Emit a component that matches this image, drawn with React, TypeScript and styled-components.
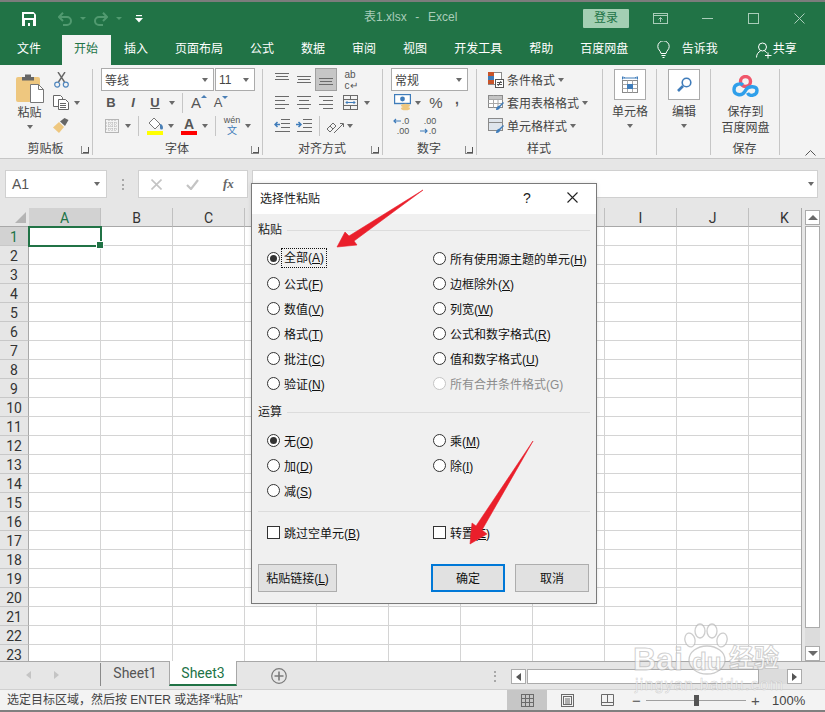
import * as React from 'react';
import styled, { createGlobalStyle } from 'styled-components';

const GlobalStyle = createGlobalStyle`
    html, body { margin: 0; padding: 0; background: #e6e6e6; }
    body {
        font-family: "Liberation Sans", "Noto Sans CJK SC", sans-serif;
        font-size: 12px;
        color: #444;
        overflow: hidden;
    }
    * { box-sizing: border-box; }
    svg { display: block; }
`;

const green = '#217346';

const Window = styled.div`
    position: relative;
    width: 825px;
    height: 712px;
    border-top: 2px solid #7c7c7c;
    display: flex;
    flex-direction: column;
    overflow: hidden;
`;

/* ---------- title bar ---------- */
const TitleBar = styled.div`
    height: 33px;
    background: ${green};
    display: flex;
    align-items: center;
    position: relative;
`;
const Qat = styled.div<{ $w: number }>`
    width: ${p => p.$w}px;
    display: flex;
    justify-content: center;
    flex: none;
`;
const TitleText = styled.div`
    position: absolute;
    left: 364px;
    top: 7px;
    line-height: 17px;
    color: #a9cdb9;
    white-space: pre;
    word-spacing: 1px;
`;
const Login = styled.div`
    width: 46px;
    height: 19px;
    margin-left: 435px;
    background: #a3cfb3;
    border-radius: 1px;
    color: ${green};
    text-align: center;
    line-height: 18px;
`;
const WinBtn = styled.div<{ $w: number }>`
    width: ${p => p.$w}px;
    display: flex;
    justify-content: center;
    flex: none;
`;

/* ---------- tabs ---------- */
const TabBar = styled.div`
    height: 30px;
    background: ${green};
    display: flex;
    align-items: stretch;
    padding-left: 3.5px;
    color: #fff;
`;
const Tab = styled.div<{ $active?: boolean }>`
    padding: 0 13.5px;
    line-height: 28px;
    flex: none;
    ${p => p.$active && `
        background: #f3f3f3;
        color: ${green};
        padding: 0 12.5px;
        margin: 0 0 0 7px;
    `}
`;
const TabIcon = styled.div<{ $ml: number }>`
    margin-left: ${p => p.$ml}px;
    display: flex;
    align-items: center;
    flex: none;
`;
const TabLabel = styled.div<{ $ml: number }>`
    margin-left: ${p => p.$ml}px;
    line-height: 28px;
    flex: none;
`;

/* ---------- ribbon ---------- */
const Ribbon = styled.div`
    height: 94px;
    background: #f3f3f3;
    border-bottom: 1px solid #c6c6c6;
    display: flex;
    position: relative;
    padding-top: 3px;
`;
const Group = styled.section<{ $w: number }>`
    width: ${p => p.$w}px;
    height: 87px;
    flex: none;
    display: flex;
    flex-direction: column;
    position: relative;
    &::after {
        content: "";
        position: absolute;
        right: 0;
        top: 1px;
        bottom: 0;
        width: 1px;
        background: #c6c6c6;
    }
`;
const GroupBody = styled.div`
    height: 72px;
    flex: none;
`;
const GroupBodyRow = styled(GroupBody)`
    display: flex;
`;
const GroupLabel = styled.div`
    height: 15px;
    line-height: 19px;
    text-align: center;
    position: relative;
    padding-right: 2px;
`;
const Launcher = styled.span`
    position: absolute;
    right: 4px;
    top: 6px;
    width: 8px;
    height: 8px;
    border-left: 1px solid #8a8a8a;
    border-bottom: 1px solid #8a8a8a;
    &::after {
        content: "";
        position: absolute;
        right: 0;
        bottom: 0;
        width: 5px;
        height: 5px;
        border-right: 1px solid #555;
        border-bottom: 1px solid #555;
    }
`;
const ToolRow = styled.div<{ $pad?: number }>`
    display: flex;
    height: 23px;
    align-items: center;
    padding-left: ${p => p.$pad ?? 0}px;
`;
const Tool = styled.div<{ $w: number; $selected?: boolean }>`
    width: ${p => p.$w}px;
    height: 23px;
    flex: none;
    display: flex;
    align-items: center;
    justify-content: center;
    ${p => p.$selected && `
        background: #c6c6c6;
        border: 1px solid #a0a0a0;
    `}
`;
const Caret = styled.span`
    display: inline-block;
    width: 0;
    height: 0;
    border-left: 3.5px solid transparent;
    border-right: 3.5px solid transparent;
    border-top: 4px solid #6a6a6a;
`;
const RowSep = styled.span<{ $m: number }>`
    width: 1px;
    height: 20px;
    flex: none;
    background: #c6c6c6;
    margin: 0 ${p => p.$m}px;
`;
const Combo = styled.div<{ $w: number; $ml?: number }>`
    width: ${p => p.$w}px;
    height: 23px;
    margin-left: ${p => p.$ml ?? 0}px;
    flex: none;
    background: #fff;
    border: 1px solid #ababab;
    display: flex;
    align-items: center;
    justify-content: space-between;
    padding: 0 5px 0 3px;
    color: #444;
`;
const FontGlyph = styled.span<{ $size: number; $bold?: boolean; $italic?: boolean; $under?: boolean; $raise?: number }>`
    font-size: ${p => p.$size}px;
    font-weight: ${p => (p.$bold ? 700 : 400)};
    font-style: ${p => (p.$italic ? 'italic' : 'normal')};
    text-decoration: ${p => (p.$under ? 'underline' : 'none')};
    font-family: "Liberation Sans", sans-serif;
    color: #555;
    line-height: 1;
    margin-bottom: ${p => p.$raise ?? 0}px;
`;
const GrowA = styled.span`
    position: relative;
    display: inline-block;
    padding-right: 4px;
`;
const GrowMark = styled.i<{ $down?: boolean }>`
    position: absolute;
    right: -2px;
    top: 0;
    width: 0;
    height: 0;
    border-left: 3px solid transparent;
    border-right: 3px solid transparent;
    ${p => (p.$down ? 'border-top: 3px solid #4a7fb5;' : 'border-bottom: 3px solid #4a7fb5;')}
`;
const ColorA = styled.span`
    display: flex;
    flex-direction: column;
    align-items: center;
    width: 16px;
    line-height: 14px;
    font-weight: 700;
    font-size: 14px;
    color: #555;
    font-family: "Liberation Sans", sans-serif;
    margin-top: 1px;
`;
const ColorBar = styled.i`
    display: block;
    width: 16px;
    height: 4px;
    background: #f00;
`;
const Phonetic = styled.span`
    display: flex;
    flex-direction: column;
    align-items: center;
    line-height: 10px;
    font-size: 9px;
    color: #555;
`;
const PhoneticZi = styled.span`
    color: #3f7cba;
    font-size: 10px;
    line-height: 11px;
`;
const WrapText = styled.span`
    font-size: 10px;
    line-height: 11px;
    color: #555;
    display: flex;
    flex-direction: column;
    font-family: "Liberation Sans", sans-serif;
`;
const DecimalStack = styled.span`
    font-size: 9px;
    line-height: 10px;
    color: #555;
    display: flex;
    flex-direction: column;
    align-items: flex-end;
    font-family: "Liberation Sans", sans-serif;
`;
const DecRow = styled.span`
    display: flex;
    align-items: center;
    gap: 1px;
`;
const ClipCol = styled.div`
    width: 47px;
    margin-left: 6px;
    flex: none;
    display: flex;
    flex-direction: column;
    align-items: center;
    padding-top: 5px;
    color: #333;
`;
const SmallCol = styled.div`
    width: 30px;
    flex: none;
`;
const BigText = styled.div`
    line-height: 16px;
    text-align: center;
    color: #444;
    white-space: nowrap;
`;
const PasteLabel = styled(BigText)`
    margin-top: 2px;
`;
const CaretLine = styled.div`
    height: 12px;
    display: flex;
    align-items: center;
    justify-content: center;
`;
const StyleRow = styled.div`
    display: flex;
    height: 23px;
    align-items: center;
    padding-left: 11px;
    gap: 3px;
    color: #444;
`;
const StyleIcon = styled.span`
    width: 16px;
    flex: none;
`;
const BigBox = styled.div`
    width: 32px;
    height: 31px;
    margin: 1px auto 4px;
    background: #fff;
    border: 1px solid #ababab;
    display: flex;
    align-items: center;
    justify-content: center;
`;
const SaveLogo = styled.div`
    height: 36px;
    padding: 7px 0 0;
    display: flex;
    justify-content: center;
`;
const Collapse = styled.div`
    position: absolute;
    right: 9px;
    bottom: 2px;
`;

/* ---------- formula bar ---------- */
const FormulaBar = styled.div`
    height: 49px;
    background: #e6e6e6;
    display: flex;
    padding: 11px 7px 0 5px;
    align-items: flex-start;
`;
const NameBox = styled.div`
    width: 102px;
    height: 28px;
    background: #fff;
    border: 1px solid #d0d0d0;
    display: flex;
    align-items: center;
    justify-content: space-between;
    padding: 0 6px;
    font-size: 14px;
    color: #555;
`;
const Dots = styled.div`
    width: 2px;
    height: 11px;
    background: repeating-linear-gradient(to bottom, #a8a8a8 0 2px, transparent 2px 4.5px);
`;
const DotsSlot = styled.div<{ $w: number }>`
    width: ${p => p.$w}px;
    height: 28px;
    flex: none;
    display: flex;
    align-items: center;
    justify-content: center;
`;
const FormulaBtns = styled.div`
    width: 110px;
    height: 28px;
    background: #fff;
    border: 1px solid #d0d0d0;
    display: flex;
    align-items: center;
    padding-left: 12px;
    gap: 24px;
    flex: none;
`;
const Fx = styled.span`
    font-family: "Liberation Serif", serif;
    font-style: italic;
    font-weight: 700;
    font-size: 13px;
    color: #666;
`;
const FormulaInput = styled.div`
    flex: 1;
    height: 28px;
    margin-left: 4px;
    background: #fff;
    border: 1px solid #d0d0d0;
    display: flex;
    align-items: center;
    justify-content: flex-end;
    padding-right: 3px;
`;

/* ---------- sheet ---------- */
const SheetArea = styled.div`
    height: 453px;
    display: flex;
    background: #e6e6e6;
`;
const Sheet = styled.div`
    width: 802px;
    flex: none;
    overflow: hidden;
    border-right: 1px solid #a8a8a8;
`;
const SheetGrid = styled.div`
    display: grid;
    grid-template-columns: 29px repeat(11, 72px);
    grid-auto-rows: 19px;
    width: 821px;
`;
const Corner = styled.div`
    height: 19px;
    background: #e6e6e6;
    border-bottom: 1px solid #a8a8a8;
    position: relative;
    &::after {
        content: "";
        position: absolute;
        right: 3px;
        bottom: 3px;
        border-left: 11px solid transparent;
        border-bottom: 11px solid #b4b4b4;
    }
`;
const ColHead = styled.div<{ $on?: boolean }>`
    background: ${p => (p.$on ? '#d2d2d2' : '#e6e6e6')};
    color: ${p => (p.$on ? green : '#333')};
    border-bottom: 1px solid #a8a8a8;
    border-right: 1px solid #c0c0c0;
    text-align: center;
    font-family: Roboto, sans-serif;
    font-size: 14px;
    line-height: 20px;
`;
const RowHead = styled.div<{ $on?: boolean }>`
    background: ${p => (p.$on ? '#d2d2d2' : '#e6e6e6')};
    color: ${p => (p.$on ? green : '#333')};
    border-bottom: 1px solid #c8c8c8;
    border-right: 1px solid #a8a8a8;
    text-align: center;
    font-family: Roboto, sans-serif;
    font-size: 14px;
    line-height: 20px;
`;
const Cell = styled.div<{ $on?: boolean }>`
    background: #fff;
    border-right: 1px solid #d4d4d4;
    border-bottom: 1px solid #d4d4d4;
    position: relative;
    ${p => p.$on && `
        border: 2px solid ${green};
        margin: -1px 0 -1px -1px;
        width: 74px;
        z-index: 2;
        &::after {
            content: "";
            position: absolute;
            right: -4px;
            bottom: -4px;
            width: 6px;
            height: 6px;
            background: ${green};
            border: 1px solid #fff;
        }
    `}
`;
const VScroll = styled.div`
    flex: 1;
    display: flex;
    flex-direction: column;
    padding: 2px 5px 0 3px;
`;
const ScrollBtn = styled.div`
    background: #fff;
    border: 1px solid #ababab;
    display: flex;
    align-items: center;
    justify-content: center;
    flex: none;
`;
const VBtn = styled(ScrollBtn)`
    height: 15px;
    width: 100%;
`;
const VThumb = styled.div`
    height: 402px;
    margin: 1px 0 0;
    background: #fff;
    border: 1px solid #ababab;
    flex: none;
`;
const VTrack = styled.div`
    flex: 1;
    background: #dcdcdc;
`;
const UpArrow = styled.i<{ $down?: boolean }>`
    width: 0;
    height: 0;
    border-left: 5px solid transparent;
    border-right: 5px solid transparent;
    ${p => (p.$down ? 'border-top: 5px solid #6a6a6a;' : 'border-bottom: 5px solid #6a6a6a;')}
`;

/* ---------- sheet tabs ---------- */
const TabsRow = styled.div`
    height: 28px;
    background: #e6e6e6;
    border-top: 1px solid #a8a8a8;
    display: flex;
    align-items: flex-start;
    flex: none;
`;
const NavSlot = styled.div`
    width: 101px;
    height: 23px;
    display: flex;
    align-items: center;
    padding-left: 26px;
    gap: 23px;
    border-right: 1px solid #8a8a8a;
    margin-top: 1px;
    flex: none;
`;
const NavArrow = styled.i<{ $right?: boolean; $dark?: boolean }>`
    width: 0;
    height: 0;
    border-top: 4px solid transparent;
    border-bottom: 4px solid transparent;
    ${p => {
        const c = p.$dark ? '#555' : '#c4c4c4';
        return p.$right ? `border-left: 5px solid ${c};` : `border-right: 5px solid ${c};`;
    }}
`;
const SheetTab = styled.div<{ $active?: boolean }>`
    width: 68px;
    height: 25px;
    margin-top: ${p => (p.$active ? -1 : 0)}px;
    flex: none;
    text-align: center;
    font-family: Roboto, sans-serif;
    font-size: 14px;
    line-height: ${p => (p.$active ? 25 : 23)}px;
    color: ${p => (p.$active ? green : '#555')};
    ${p => p.$active && `
        background: #fff;
        border-bottom: 2px solid ${green};
        border-left: 1px solid #a8a8a8;
        border-right: 1px solid #a8a8a8;
    `}
`;
const AddSheet = styled.div`
    margin: 6px 0 0 34px;
    flex: none;
`;
const HScroll = styled.div`
    margin: 7px 23px 0 auto;
    width: 291px;
    height: 15px;
    display: flex;
    position: relative;
`;
const HBtn = styled(ScrollBtn)`
    width: 15px;
    height: 15px;
`;
const HThumb = styled.div`
    width: 232px;
    margin-left: 1px;
    background: #fff;
    border: 1px solid #ababab;
`;
const HTrack = styled.div`
    flex: 1;
    background: #dcdcdc;
`;
const HDots = styled.div`
    position: absolute;
    left: -17px;
    top: 2px;
`;

/* ---------- status bar ---------- */
const StatusBar = styled.div`
    height: 23px;
    flex: none;
    background: #f3f3f3;
    border-top: 1px solid #d0d0d0;
    border-bottom: 2px solid #808080;
    display: flex;
    align-items: stretch;
    color: #444;
`;
const StatusText = styled.div`
    padding-left: 7px;
    width: 507px;
    line-height: 20px;
    flex: none;
    white-space: nowrap;
`;
const ViewBtn = styled.div<{ $on?: boolean }>`
    width: 40px;
    background: ${p => (p.$on ? '#c6c6c6' : 'transparent')};
    display: flex;
    align-items: center;
    justify-content: center;
    flex: none;
`;
const Zoomer = styled.div`
    flex: 1;
    display: flex;
    align-items: center;
    padding-left: 4px;
`;
const ZoomMark = styled.span`
    font-size: 15px;
    width: 11px;
    text-align: center;
    color: #555;
    font-family: "Liberation Sans", sans-serif;
`;
const Slider = styled.div`
    width: 100px;
    height: 1px;
    background: #a0a0a0;
    margin: 0 4px;
    position: relative;
`;
const SliderThumb = styled.i`
    position: absolute;
    left: 48px;
    top: -5px;
    width: 5px;
    height: 11px;
    background: #555;
`;
const ZoomPct = styled.span`
    margin-left: 11px;
    font-size: 13px;
    color: #444;
    font-family: "Liberation Sans", sans-serif;
`;

/* ---------- dialog ---------- */
const Dialog = styled.div`
    position: absolute;
    left: 251px;
    top: 181px;
    width: 346px;
    height: 421px;
    background: #f0f0f0;
    border: 1px solid #7a7a7a;
    box-shadow: 0 0 4px rgba(0, 0, 0, .12);
    color: #111;
    z-index: 5;
`;
const DialogTitle = styled.div`
    height: 30px;
    background: #fff;
    display: flex;
    align-items: center;
    padding: 0 0 3px 8px;
    color: #222;
`;
const TitleCaption = styled.span`
    width: 60px;
    flex: none;
`;
const TitleHelp = styled.span`
    margin-left: 203px;
    font-size: 14px;
    width: 16px;
`;
const TitleClose = styled.span`
    margin-left: 28px;
`;
const DialogBody = styled.div`
    padding: 6px 6px 0 6px;
`;
const SectionHead = styled.div<{ $mt?: number }>`
    height: 20px;
    display: flex;
    align-items: center;
    gap: 5px;
    line-height: 20px;
    color: #222;
    margin-top: ${p => p.$mt ?? 0}px;
    &::after {
        content: "";
        flex: 1;
        height: 1px;
        background: #dcdcdc;
    }
`;
const Options = styled.div<{ $mt: number }>`
    display: grid;
    grid-template-columns: 166px 1fr;
    grid-auto-rows: 25px;
    margin-top: ${p => p.$mt}px;
    padding-left: 9px;
`;
const Option = styled.div<{ $off?: boolean }>`
    display: flex;
    align-items: center;
    gap: 4px;
    white-space: nowrap;
    color: ${p => (p.$off ? '#8c8c8c' : '#111')};
    u { text-underline-offset: 1px; }
`;
const OptionText = styled.span`
    margin-top: -1px;
`;
const Radio = styled.span<{ $on?: boolean; $off?: boolean }>`
    width: 13px;
    height: 13px;
    border-radius: 50%;
    background: #fff;
    border: 1px solid ${p => (p.$off ? '#c4c4c4' : '#333')};
    flex: none;
    display: flex;
    align-items: center;
    justify-content: center;
    &::after {
        content: "";
        display: ${p => (p.$on ? 'block' : 'none')};
        width: 7px;
        height: 7px;
        border-radius: 50%;
        background: #333;
    }
`;
const Check = styled.span`
    width: 13px;
    height: 13px;
    background: #fff;
    border: 1px solid #333;
    flex: none;
`;
const Focused = styled(OptionText)`
    outline: 1px dotted #111;
    outline-offset: 2px;
    line-height: 14px;
`;
const Divider = styled.div`
    height: 1px;
    background: #dcdcdc;
    margin-top: 8px;
`;
const ButtonRow = styled.div`
    display: flex;
    margin-top: 19px;
`;
const DlgBtn = styled.div<{ $w: number; $primary?: boolean; $ml?: number }>`
    width: ${p => p.$w}px;
    height: 28px;
    margin-left: ${p => p.$ml ?? 0}px;
    flex: none;
    background: #e1e1e1;
    border: ${p => (p.$primary ? '2px solid #0078d7' : '1px solid #adadad')};
    display: flex;
    align-items: center;
    justify-content: center;
    padding-bottom: 2px;
    color: #111;
    u { text-underline-offset: 1px; }
`;

/* ---------- overlays ---------- */
const ArrowLayer = styled.svg`
    position: absolute;
    left: 0;
    top: -2px;
    z-index: 6;
    pointer-events: none;
`;
const Watermark = styled.div`
    position: absolute;
    left: 632px;
    top: 620px;
    width: 160px;
    height: 75px;
    z-index: 7;
    pointer-events: none;
    color: rgba(255, 255, 255, .72);
    -webkit-text-stroke: 1px rgba(160, 160, 160, .5);
    font-family: "Liberation Sans", sans-serif;
`;
const WmText = styled.span<{ $x: number; $size: number; $y: number }>`
    position: absolute;
    left: ${p => p.$x}px;
    top: ${p => p.$y}px;
    font-size: ${p => p.$size}px;
    line-height: 1;
    font-weight: 700;
    white-space: nowrap;
`;
const WmCjk = styled(WmText)`
    font-family: "Noto Sans CJK SC", sans-serif;
`;
const WmUrl = styled.span`
    position: absolute;
    left: 3px;
    top: 55px;
    font-size: 16px;
    line-height: 16px;
    letter-spacing: 1.2px;
    white-space: nowrap;
    -webkit-text-stroke: .5px rgba(160, 160, 160, .5);
`;
const WmPaw = styled.svg`
    position: absolute;
    left: 50px;
    top: 0;
`;

/* ---------- icons ---------- */
const SaveIcon = () => (
    <svg width="14" height="14" viewBox="0 0 14 14">
        <path d="M0 0h11.500L14 2.500V14H0z" fill="#fff" />
        <rect x="2" y="2" width="10" height="4" fill={green} />
        <rect x="3" y="8" width="8" height="6" fill={green} />
        <rect x="6" y="11" width="2" height="3" fill="#fff" />
    </svg>
);
const UndoIcon = ({ flip }: { flip?: boolean }) => (
    <svg width="14" height="14" viewBox="0 0 14 14" style={flip ? { transform: 'scaleX(-1)' } : undefined}>
        <path d="M2 5h7a3.600 3.600 0 0 1 0 8H5" fill="none" stroke="#519a70" strokeWidth="2" />
        <path d="M5 .8 1 5l4 4" fill="none" stroke="#519a70" strokeWidth="2" />
    </svg>
);
const DimCaret = styled.span<{ $c: string }>`
    width: 0;
    height: 0;
    border-left: 3px solid transparent;
    border-right: 3px solid transparent;
    border-top: 3px solid ${p => p.$c};
`;
const QatCustom = () => (
    <svg width="8" height="8" viewBox="0 0 8 8">
        <rect x="1" y="0" width="6" height="1.200" fill="#fff" />
        <path d="M0 3h8L4 7.500z" fill="#fff" />
    </svg>
);
const RibbonOpt = () => (
    <svg width="15" height="12" viewBox="0 0 15 12" fill="none" stroke="#a9cdb9">
        <rect x=".5" y=".5" width="14" height="10" />
        <path d="M.5 2.500h14M7.500 9V4.500M5.500 6.500l2-2 2 2" />
    </svg>
);
const Minimize = () => <svg width="11" height="11" viewBox="0 0 11 11"><path d="M0 5.500h11" stroke="#a9cdb9" /></svg>;
const Maximize = () => <svg width="11" height="11" viewBox="0 0 11 11"><rect x=".5" y=".5" width="10" height="10" fill="none" stroke="#a9cdb9" /></svg>;
const CloseWin = () => <svg width="11" height="11" viewBox="0 0 11 11"><path d="M.5.500l10 10M10.500.500l-10 10" stroke="#a9cdb9" fill="none" /></svg>;
const BulbIcon = () => (
    <svg width="13" height="18" viewBox="0 0 13 18" fill="none" stroke="#fff">
        <path d="M4 12.500C3.500 9.500.8 8.700.8 5.500a5.700 5.700 0 0 1 11.400 0c0 3.200-2.700 4-3.200 7z" />
        <path d="M4.500 14.500h4M5.500 16.500h2" />
    </svg>
);
const PersonIcon = () => (
    <svg width="16" height="17" viewBox="0 0 16 17" fill="none" stroke="#fff">
        <circle cx="6.500" cy="5" r="4" />
        <path d="M.5 15.500c0-3.500 2-5.500 4-6.500M8.500 9c1 .4 1.800 1 2.400 1.800M12 10.500v6M9 13.500h6.500" />
    </svg>
);
const PasteIcon = () => (
    <svg width="28" height="30" viewBox="0 0 28 30">
        <rect x="0" y="4" width="24" height="25" rx="2" fill="#eec77f" />
        <path d="M6 4h3V1.500h6V4h3v3.500H6z" fill="#666" />
        <path d="M14.500 11.500h8l5 5v13h-13z" fill="#fff" stroke="#777" />
        <path d="M22.500 11.500v5h5" fill="none" stroke="#777" />
    </svg>
);
const ScissorsIcon = () => (
    <svg width="15" height="16" viewBox="0 0 15 16" fill="none">
        <path d="M4.500 10 11 0M10.500 10 4 0" stroke="#666" strokeWidth="1.400" />
        <circle cx="3.200" cy="12.600" r="2.500" stroke="#4f86bd" strokeWidth="1.200" />
        <circle cx="11.800" cy="12.600" r="2.500" stroke="#4f86bd" strokeWidth="1.200" />
    </svg>
);
const CopyIcon = () => (
    <svg width="16" height="15" viewBox="0 0 16 15" fill="#fff" stroke="#666">
        <path d="M.5.500h7l2 2v9h-9z" />
        <path d="M5.500 4.500h7l3 3v7h-10z" />
        <path d="M7 8.500h6M7 10.500h6M7 12.500h6" />
    </svg>
);
const BrushIcon = () => (
    <svg width="16" height="15" viewBox="0 0 16 15">
        <path d="M0 9.500 6 4l5 5-5 6z" fill="#eec77f" />
        <path d="M7 3.500 11.500 0 15.500 2 12 8z" fill="#666" />
    </svg>
);
const BordersIcon = () => (
    <svg width="14" height="14" viewBox="0 0 14 14" fill="none" stroke="#777" strokeDasharray="1 1">
        <rect x=".5" y=".5" width="13" height="13" />
        <path d="M7 1v12M1 7h12M4 1v12M10 1v12M1 4h12M1 10h12" stroke="#b4b4b4" />
    </svg>
);
const FillIcon = () => (
    <svg width="17" height="18" viewBox="0 0 17 18">
        <path d="M7 1l6 6-5 5-6-6z" fill="#fff" stroke="#777" />
        <path d="M13 7c2 0 3 2 3 4a1.500 1.500 0 0 1-3 0z" fill="#4a7fb5" />
        <rect x="0" y="14" width="16" height="4" fill="#ffff00" />
    </svg>
);
const AlignIcon = ({ kind }: { kind: 'top' | 'mid' | 'bot' | 'left' | 'center' | 'right' }) => {
    const vert: Record<string, number[]> = { top: [1, 4, 7], mid: [4, 7, 10], bot: [6, 9, 12] };
    if (vert[kind]) {
        return (
            <svg width="14" height="15" viewBox="0 0 14 15" stroke="#6a6a6a" fill="none">
                {vert[kind].map((y, i) => <path key={i} d={`M${i === 1 ? 1 : 0} ${y}.5H${i === 1 ? 13 : 14}`} />)}
            </svg>
        );
    }
    const w = [14, 10, 14, 10];
    return (
        <svg width="14" height="13" viewBox="0 0 14 13" stroke="#6a6a6a" fill="none">
            {w.map((len, i) => {
                const x = kind === 'left' ? 0 : kind === 'right' ? 14 - len : (14 - len) / 2;
                return <path key={i} d={`M${x} ${i * 4}.5h${len}`} />;
            })}
        </svg>
    );
};
const MergeIcon = () => (
    <svg width="15" height="15" viewBox="0 0 15 15" fill="none" stroke="#6a6a6a">
        <rect x=".5" y=".5" width="14" height="14" />
        <path d="M.5 4.500h14M.5 10.500h14M7.500.500v4M7.500 10.500v4" />
        <path d="M3 7.500h9M4.500 6 3 7.500 4.500 9M10.500 6 12 7.500 10.500 9" stroke="#3f7cba" />
    </svg>
);
const IndentIcon = ({ out }: { out?: boolean }) => (
    <svg width="16" height="13" viewBox="0 0 16 13" fill="none">
        <path d="M7 .5h9M7 4.500h9M7 8.500h9M1 12.500h15" stroke="#6a6a6a" />
        <path d={out ? 'M6 5.500H1M3.500 3 1 5.500 3.500 8' : 'M0 5.500h5M2.500 3 5 5.500 2.500 8'} stroke="#3f7cba" strokeWidth="1.500" />
    </svg>
);
const OrientIcon = () => (
    <svg width="18" height="16" viewBox="0 0 18 16" fill="none" style={{ overflow: 'visible' }}>
        <path d="M8 15 17 6M14 5.500h3.500V9" stroke="#6a6a6a" />
        <path d="M1 11 7 5l3 3-6 6zM4 8l3 3" stroke="#6a6a6a" />
    </svg>
);
const CurrencyIcon = () => (
    <svg width="17" height="17" viewBox="0 0 17 17">
        <rect x=".5" y=".5" width="16" height="9" fill="#fff" stroke="#3f7cba" strokeWidth="1.400" />
        <circle cx="8.500" cy="5" r="2.400" fill="#3f7cba" />
        <ellipse cx="11.500" cy="11.500" rx="4.500" ry="1.800" fill="#eec77f" />
        <ellipse cx="11.500" cy="14.500" rx="4.500" ry="1.800" fill="#eec77f" />
    </svg>
);
const MiniArrow = ({ left }: { left?: boolean }) => (
    <svg width="8" height="6" viewBox="0 0 8 6" fill="none" stroke="#3f7cba" strokeWidth="1.200">
        <path d={left ? 'M8 3H1M3 1 1 3l2 2' : 'M0 3h7M5 1l2 2-2 2'} />
    </svg>
);
const CondIcon = () => (
    <svg width="16" height="16" viewBox="0 0 16 16">
        <rect x=".5" y=".5" width="13" height="12" fill="#fff" stroke="#8a8a8a" />
        <rect x="0" y="0" width="6" height="4" fill="#c8542a" />
        <rect x="0" y="4" width="6" height="4" fill="#3f7cba" />
        <rect x="0" y="8" width="6" height="4" fill="#c8542a" />
        <rect x="7.500" y="7.500" width="8" height="8" fill="#fff" stroke="#555" />
        <path d="M9 10.500h5M9 12.500h5M10 14l3-5" stroke="#555" fill="none" />
    </svg>
);
const TableStyleIcon = ({ plain }: { plain?: boolean }) => (
    <svg width="16" height="16" viewBox="0 0 16 16">
        <rect x=".5" y=".5" width="14" height="12" fill={plain ? '#dfe5ec' : '#fff'} stroke="#8a8a8a" />
        {!plain && <path d="M.5 4.500h14M.5 8.500h14M5.500.500v12M10 .500v12" stroke="#a8a8a8" fill="none" />}
        {!plain && <rect x="1" y="1" width="13" height="3" fill="#c4c4c4" />}
        {plain && <path d="M.5 4.500h14" stroke="#8a8a8a" />}
        <path d="M8 15c0-3 2-4 3.500-4.500L15 7l1 1-3.500 3.500C12.500 13.500 10 15.500 8 15z" fill="#3f7cba" />
    </svg>
);
const CellsIcon = () => (
    <svg width="16" height="17" viewBox="0 0 16 17" fill="none">
        <path d="M.5 2h15M.5.500v3M15.500.500v3M3 2l-1.500-1M13 2l1.500-1" stroke="#3f7cba" />
        <rect x=".5" y="4.500" width="15" height="12" stroke="#8a8a8a" fill="#fff" />
        <path d="M.5 8.500h15M.5 12.500h15M5.500 4.500v12M10.500 4.500v12" stroke="#a8a8a8" />
        <rect x="5" y="8" width="6" height="5" fill="#3f7cba" />
    </svg>
);
const SearchIcon = () => (
    <svg width="15" height="15" viewBox="0 0 15 15" fill="none" stroke="#3f7cba">
        <circle cx="9.500" cy="5.500" r="4.300" strokeWidth="1.600" />
        <path d="M6 9 1 14" strokeWidth="2.600" />
    </svg>
);
const BaiduPan = () => (
    <svg width="27" height="22" viewBox="0 0 27 22" fill="none" strokeWidth="3.400">
        <circle cx="13.500" cy="6.500" r="5" stroke="#f0566a" />
        <path d="M11 9.800C8.500 8 2 9 2 14.500c0 5.500 7.500 7 10.500 2.500l2-3c2-3 10.500-3.500 10.500 1.500 0 5-7.500 6.500-9.500 2.500" stroke="#2f9fea" />
    </svg>
);
const CollapseIcon = () => <svg width="11" height="6" viewBox="0 0 11 6"><path d="M.5 5.500l5-5 5 5" fill="none" stroke="#555" /></svg>;
const XMark = () => <svg width="11" height="11" viewBox="0 0 11 11"><path d="M.5.500l10 10M10.500.500l-10 10" stroke="#c4c4c4" strokeWidth="1.600" /></svg>;
const CheckMark = () => <svg width="13" height="11" viewBox="0 0 13 11"><path d="M1 6l4 4 7-9" stroke="#c4c4c4" strokeWidth="2.200" fill="none" /></svg>;
const PlusCircle = () => (
    <svg width="16" height="16" viewBox="0 0 16 16" fill="none" stroke="#7a7a7a">
        <circle cx="8" cy="8" r="7.300" strokeWidth="1.200" />
        <path d="M8 3.500v9M3.500 8h9" strokeWidth="1.600" />
    </svg>
);
const NormalView = () => (
    <svg width="13" height="13" viewBox="0 0 13 13" fill="none" stroke="#6a6a6a">
        <rect x=".5" y=".5" width="12" height="12" />
        <path d="M4.500.500v12M8.500.500v12M.5 4.500h12M.5 8.500h12" />
    </svg>
);
const PageView = () => (
    <svg width="13" height="13" viewBox="0 0 13 13" fill="none" stroke="#6a6a6a">
        <rect x=".5" y=".5" width="12" height="12" />
        <rect x="2.500" y="2.500" width="8" height="8" />
        <path d="M4 5h5M4 7h5M4 9h5" />
    </svg>
);
const BreakView = () => (
    <svg width="13" height="12" viewBox="0 0 13 12" fill="none" stroke="#6a6a6a">
        <path d="M.5.500h12v11H.5zM.5 8.500h12M6.500.500v8" />
    </svg>
);

/* ---------- data ---------- */
type Opt = { text: string; accel: string; on?: boolean; off?: boolean; focus?: boolean };

const pasteOpts: Opt[] = [
    { text: '全部', accel: 'A', on: true, focus: true },
    { text: '所有使用源主题的单元', accel: 'H' },
    { text: '公式', accel: 'F' },
    { text: '边框除外', accel: 'X' },
    { text: '数值', accel: 'V' },
    { text: '列宽', accel: 'W' },
    { text: '格式', accel: 'T' },
    { text: '公式和数字格式', accel: 'R' },
    { text: '批注', accel: 'C' },
    { text: '值和数字格式', accel: 'U' },
    { text: '验证', accel: 'N' },
    { text: '所有合并条件格式', accel: 'G', off: true },
];
const opOpts: Opt[] = [
    { text: '无', accel: 'O', on: true },
    { text: '乘', accel: 'M' },
    { text: '加', accel: 'D' },
    { text: '除', accel: 'I' },
    { text: '减', accel: 'S' },
];
const mainTabs = ['插入', '页面布局', '公式', '数据', '审阅', '视图', '开发工具', '帮助', '百度网盘'];
const columns = ['A', 'B', 'C', 'D', 'E', 'F', 'G', 'H', 'I', 'J', 'K'];
const rows = Array.from({ length: 23 }, (_, i) => i + 1);

const RadioOption: React.FC<{ opt: Opt }> = ({ opt }) => {
    const label = <>{opt.text}({opt.off ? opt.accel : <u>{opt.accel}</u>})</>;
    return (
        <Option $off={opt.off}>
            <Radio $on={opt.on} $off={opt.off} />
            {opt.focus ? <Focused>{label}</Focused> : <OptionText>{label}</OptionText>}
        </Option>
    );
};

export default function App() {
    return (
        <Window>
            <GlobalStyle />

            <TitleBar>
                <Qat $w={58}><SaveIcon /></Qat>
                <UndoIcon />
                <Qat $w={22}><DimCaret $c="#519a70" /></Qat>
                <UndoIcon flip />
                <Qat $w={22}><DimCaret $c="#519a70" /></Qat>
                <Qat $w={18}><QatCustom /></Qat>
                <TitleText>表1.xlsx  -  Excel</TitleText>
                <Login>登录</Login>
                <WinBtn $w={63}><RibbonOpt /></WinBtn>
                <WinBtn $w={30}><Minimize /></WinBtn>
                <WinBtn $w={62}><Maximize /></WinBtn>
                <WinBtn $w={30}><CloseWin /></WinBtn>
            </TitleBar>

            <TabBar>
                <Tab>文件</Tab>
                <Tab $active>开始</Tab>
                {mainTabs.map(t => <Tab key={t}>{t}</Tab>)}
                <TabIcon $ml={15}><BulbIcon /></TabIcon>
                <TabLabel $ml={12}>告诉我</TabLabel>
                <TabIcon $ml={38}><PersonIcon /></TabIcon>
                <TabLabel $ml={1}>共享</TabLabel>
            </TabBar>

            <Ribbon>
                <Group $w={93}>
                    <GroupBodyRow>
                        <ClipCol>
                            <PasteIcon />
                            <PasteLabel>粘贴</PasteLabel>
                            <CaretLine><Caret /></CaretLine>
                        </ClipCol>
                        <SmallCol>
                            <ToolRow><Tool $w={16}><ScissorsIcon /></Tool></ToolRow>
                            <ToolRow><Tool $w={16}><CopyIcon /></Tool><Tool $w={16}><Caret /></Tool></ToolRow>
                            <ToolRow><Tool $w={16}><BrushIcon /></Tool></ToolRow>
                        </SmallCol>
                    </GroupBodyRow>
                    <GroupLabel>剪贴板<Launcher /></GroupLabel>
                </Group>

                <Group $w={170}>
                    <GroupBody>
                        <ToolRow $pad={8} style={{ gap: 1 }}>
                            <Combo $w={113}>等线<Caret /></Combo>
                            <Combo $w={40}><span>11</span><Caret /></Combo>
                        </ToolRow>
                        <ToolRow $pad={7}>
                            <Tool $w={22}><FontGlyph $size={13} $bold>B</FontGlyph></Tool>
                            <Tool $w={22}><FontGlyph $size={13} $bold $italic>I</FontGlyph></Tool>
                            <Tool $w={22}><FontGlyph $size={13} $bold $under>U</FontGlyph></Tool>
                            <Tool $w={12}><Caret /></Tool>
                            <RowSep $m={4} />
                            <Tool $w={22}><GrowA><FontGlyph $size={15}>A</FontGlyph><GrowMark /></GrowA></Tool>
                            <Tool $w={22}><GrowA><FontGlyph $size={13}>A</FontGlyph><GrowMark $down /></GrowA></Tool>
                        </ToolRow>
                        <ToolRow $pad={7}>
                            <Tool $w={24}><BordersIcon /></Tool>
                            <Tool $w={8}><Caret /></Tool>
                            <RowSep $m={6} />
                            <Tool $w={20}><FillIcon /></Tool>
                            <Tool $w={12}><Caret /></Tool>
                            <Tool $w={24}><ColorA>A<ColorBar /></ColorA></Tool>
                            <Tool $w={8}><Caret /></Tool>
                            <RowSep $m={6} />
                            <Tool $w={20}><Phonetic>wén<PhoneticZi>文</PhoneticZi></Phonetic></Tool>
                            <Tool $w={12}><Caret /></Tool>
                        </ToolRow>
                    </GroupBody>
                    <GroupLabel>字体<Launcher /></GroupLabel>
                </Group>

                <Group $w={120}>
                    <GroupBody>
                        <ToolRow $pad={8}>
                            <Tool $w={22}><AlignIcon kind="top" /></Tool>
                            <Tool $w={22}><AlignIcon kind="mid" /></Tool>
                            <Tool $w={22} $selected><AlignIcon kind="bot" /></Tool>
                            <Tool $w={28}><WrapText><span>ab</span><span>c↵</span></WrapText></Tool>
                        </ToolRow>
                        <ToolRow $pad={8}>
                            <Tool $w={22}><AlignIcon kind="left" /></Tool>
                            <Tool $w={22}><AlignIcon kind="center" /></Tool>
                            <Tool $w={22}><AlignIcon kind="right" /></Tool>
                            <Tool $w={26}><MergeIcon /></Tool>
                            <Tool $w={8}><Caret /></Tool>
                        </ToolRow>
                        <ToolRow $pad={8}>
                            <Tool $w={22}><IndentIcon out /></Tool>
                            <Tool $w={22}><IndentIcon /></Tool>
                            <RowSep $m={4} />
                            <Tool $w={22}><OrientIcon /></Tool>
                            <Tool $w={8}><Caret /></Tool>
                        </ToolRow>
                    </GroupBody>
                    <GroupLabel>对齐方式<Launcher /></GroupLabel>
                </Group>

                <Group $w={94}>
                    <GroupBody>
                        <ToolRow><Combo $w={77} $ml={8}>常规<Caret /></Combo></ToolRow>
                        <ToolRow $pad={8}>
                            <Tool $w={22}><CurrencyIcon /></Tool>
                            <Tool $w={10}><Caret /></Tool>
                            <Tool $w={26}><FontGlyph $size={15}>%</FontGlyph></Tool>
                            <Tool $w={16}><FontGlyph $size={14} $bold $raise={7}>,</FontGlyph></Tool>
                        </ToolRow>
                        <ToolRow $pad={8}>
                            <Tool $w={20}>
                                <DecimalStack>
                                    <DecRow><MiniArrow left />.0</DecRow>
                                    <span>.00</span>
                                </DecimalStack>
                            </Tool>
                            <Tool $w={34}>
                                <DecimalStack>
                                    <span>.00</span>
                                    <DecRow><MiniArrow />.0</DecRow>
                                </DecimalStack>
                            </Tool>
                        </ToolRow>
                    </GroupBody>
                    <GroupLabel>数字<Launcher /></GroupLabel>
                </Group>

                <Group $w={126}>
                    <GroupBody>
                        <StyleRow><StyleIcon><CondIcon /></StyleIcon>条件格式<Caret /></StyleRow>
                        <StyleRow><StyleIcon><TableStyleIcon /></StyleIcon>套用表格格式<Caret /></StyleRow>
                        <StyleRow><StyleIcon><TableStyleIcon plain /></StyleIcon>单元格样式<Caret /></StyleRow>
                    </GroupBody>
                    <GroupLabel>样式</GroupLabel>
                </Group>

                <Group $w={54}>
                    <GroupBody>
                        <BigBox><CellsIcon /></BigBox>
                        <BigText>单元格</BigText>
                        <CaretLine><Caret /></CaretLine>
                    </GroupBody>
                </Group>

                <Group $w={54}>
                    <GroupBody>
                        <BigBox><SearchIcon /></BigBox>
                        <BigText>编辑</BigText>
                        <CaretLine><Caret /></CaretLine>
                    </GroupBody>
                </Group>

                <Group $w={69}>
                    <GroupBody>
                        <SaveLogo><BaiduPan /></SaveLogo>
                        <BigText>保存到</BigText>
                        <BigText>百度网盘</BigText>
                    </GroupBody>
                    <GroupLabel>保存</GroupLabel>
                </Group>

                <Collapse><CollapseIcon /></Collapse>
            </Ribbon>

            <FormulaBar>
                <NameBox>A1<Caret /></NameBox>
                <DotsSlot $w={31}><Dots /></DotsSlot>
                <FormulaBtns><XMark /><CheckMark /><Fx>fx</Fx></FormulaBtns>
                <FormulaInput><Caret /></FormulaInput>
            </FormulaBar>

            <SheetArea>
                <Sheet>
                    <SheetGrid>
                        <Corner />
                        {columns.map((c, i) => <ColHead key={c} $on={i === 0}>{c}</ColHead>)}
                        {rows.map(r => (
                            <React.Fragment key={r}>
                                <RowHead $on={r === 1}>{r}</RowHead>
                                {columns.map((c, i) => <Cell key={c} $on={r === 1 && i === 0} />)}
                            </React.Fragment>
                        ))}
                    </SheetGrid>
                </Sheet>
                <VScroll>
                    <VBtn><UpArrow /></VBtn>
                    <VThumb />
                    <VTrack />
                    <VBtn><UpArrow $down /></VBtn>
                </VScroll>
            </SheetArea>

            <TabsRow>
                <NavSlot><NavArrow /><NavArrow $right /></NavSlot>
                <SheetTab>Sheet1</SheetTab>
                <SheetTab $active>Sheet3</SheetTab>
                <AddSheet><PlusCircle /></AddSheet>
                <HScroll>
                    <HDots><Dots /></HDots>
                    <HBtn><NavArrow $dark /></HBtn>
                    <HThumb />
                    <HTrack />
                    <HBtn><NavArrow $right $dark /></HBtn>
                </HScroll>
            </TabsRow>

            <StatusBar>
                <StatusText>选定目标区域，然后按 ENTER 或选择“粘贴”</StatusText>
                <ViewBtn $on><NormalView /></ViewBtn>
                <ViewBtn><PageView /></ViewBtn>
                <ViewBtn><BreakView /></ViewBtn>
                <Zoomer>
                    <ZoomMark>−</ZoomMark>
                    <Slider><SliderThumb /></Slider>
                    <ZoomMark>+</ZoomMark>
                    <ZoomPct>100%</ZoomPct>
                </Zoomer>
            </StatusBar>

            <Dialog>
                <DialogTitle>
                    <TitleCaption>选择性粘贴</TitleCaption>
                    <TitleHelp>?</TitleHelp>
                    <TitleClose>
                        <svg width="11" height="11" viewBox="0 0 11 11"><path d="M.5.500l10 10M10.500.500l-10 10" stroke="#222" strokeWidth="1.100" /></svg>
                    </TitleClose>
                </DialogTitle>
                <DialogBody>
                    <SectionHead>粘贴</SectionHead>
                    <Options $mt={6}>
                        {pasteOpts.map(o => <RadioOption key={o.accel} opt={o} />)}
                    </Options>
                    <SectionHead $mt={6}>运算</SectionHead>
                    <Options $mt={6}>
                        {opOpts.map(o => <RadioOption key={o.accel} opt={o} />)}
                    </Options>
                    <Divider />
                    <Options $mt={8}>
                        <Option><Check /><OptionText>跳过空单元(<u>B</u>)</OptionText></Option>
                        <Option><Check /><OptionText>转置(<u>E</u>)</OptionText></Option>
                    </Options>
                    <ButtonRow>
                        <DlgBtn $w={79}><span>粘贴链接(<u>L</u>)</span></DlgBtn>
                        <DlgBtn $w={74} $ml={94} $primary>确定</DlgBtn>
                        <DlgBtn $w={74} $ml={10}>取消</DlgBtn>
                    </ButtonRow>
                </DialogBody>
            </Dialog>

            <ArrowLayer width="825" height="712" viewBox="0 0 825 712">
                <path d="M423 190 L354 241 L357 245 L337 247 L345 232 L349 236 Z" fill="#ea1f2b" stroke="#ea1f2b" strokeWidth=".6" />
                <path d="M533 441 L482 530 L487 534 L470 544 L472 523 L476 526 Z" fill="#ea1f2b" stroke="#ea1f2b" strokeWidth=".6" />
            </ArrowLayer>

            <Watermark>
                <WmPaw width="50" height="56" viewBox="0 0 50 56" fill="rgba(255,255,255,.55)" stroke="rgba(170,170,170,.6)" strokeWidth="1.300">
                    <ellipse cx="8" cy="18" rx="5" ry="7" transform="rotate(-15 8 18)" />
                    <ellipse cx="18" cy="9" rx="5" ry="7" />
                    <ellipse cx="30" cy="9" rx="5" ry="7" />
                    <ellipse cx="40" cy="18" rx="5" ry="7" transform="rotate(15 40 18)" />
                    <ellipse cx="25" cy="38" rx="18" ry="14" />
                </WmPaw>
                <WmText $x={1} $y={21} $size={32}>Bai</WmText>
                <WmText $x={60} $y={28} $size={24}>du</WmText>
                <WmCjk $x={97} $y={22} $size={25}>经验</WmCjk>
                <WmUrl>jingyan.baidu.com</WmUrl>
            </Watermark>
        </Window>
    );
}
